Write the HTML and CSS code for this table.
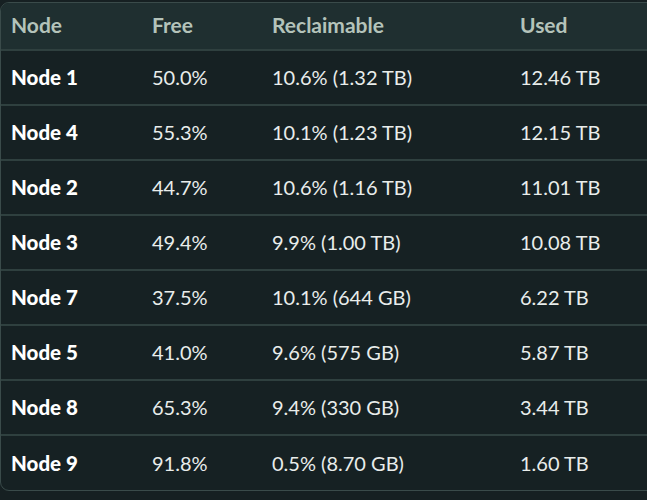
FILE: index.html
```html
<!DOCTYPE html>
<html>
<head>
<meta charset="utf-8">
<link rel="stylesheet" href="styles.css">
</head>
<body>
<div class="card">
  <div class="row head">
    <div>Node</div><div>Free</div><div>Reclaimable</div><div>Used</div>
  </div>
  <div class="row"><div class="name">Node 1</div><div>50.0%</div><div>10.6% (1.32 TB)</div><div>12.46 TB</div></div>
  <div class="row"><div class="name">Node 4</div><div>55.3%</div><div>10.1% (1.23 TB)</div><div>12.15 TB</div></div>
  <div class="row"><div class="name">Node 2</div><div>44.7%</div><div>10.6% (1.16 TB)</div><div>11.01 TB</div></div>
  <div class="row"><div class="name">Node 3</div><div>49.4%</div><div>9.9% (1.00 TB)</div><div>10.08 TB</div></div>
  <div class="row"><div class="name">Node 7</div><div>37.5%</div><div>10.1% (644 GB)</div><div>6.22 TB</div></div>
  <div class="row"><div class="name">Node 5</div><div>41.0%</div><div>9.6% (575 GB)</div><div>5.87 TB</div></div>
  <div class="row"><div class="name">Node 8</div><div>65.3%</div><div>9.4% (330 GB)</div><div>3.44 TB</div></div>
  <div class="row last"><div class="name">Node 9</div><div>91.8%</div><div>0.5% (8.70 GB)</div><div>1.60 TB</div></div>
</div>
</body>
</html>
```
FILE: styles.css
```css
html, body {
  margin: 0;
  padding: 0;
  background: #162022;
  overflow: hidden;
}
body {
  font-family: Lato, "Open Sans", sans-serif;
  color: #e9edeb;
}
.card {
  margin-top: 2px;
  width: 670px;
  border: 1px solid #3a4b4a;
  border-radius: 9px;
  overflow: hidden;
  background: #162123;
}
.row {
  display: grid;
  grid-template-columns: 141px 120px 248px 1fr;
  align-items: center;
  padding-left: 10px;
  height: 52px;
  padding-bottom: 1px;
  border-bottom: 2px solid #2f403f;
  font-size: 20px;
}
.row.last {
  height: 53px;
  border-bottom: none;
}
.head {
  height: 43px;
  padding-bottom: 3px;
  background: #1f2f30;
  color: #b4c3ba;
  font-size: 21px;
  font-weight: 700;
}
.name {
  font-weight: 900;
  font-size: 20.5px;
  color: #ffffff;
}
```
